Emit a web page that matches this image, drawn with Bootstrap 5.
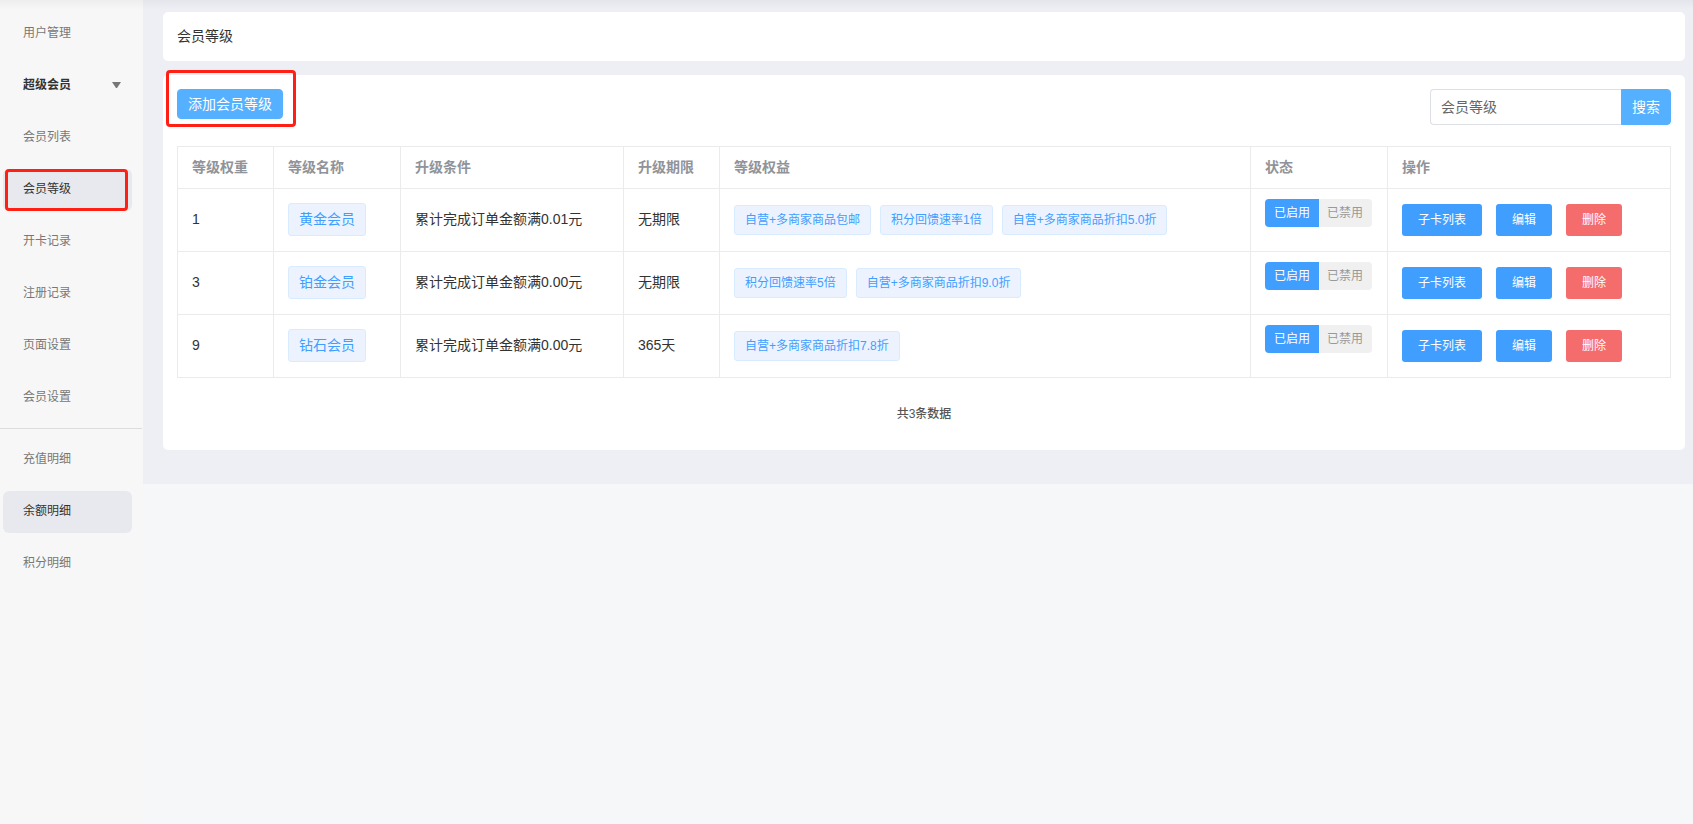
<!DOCTYPE html>
<html lang="zh-CN">
<head>
<meta charset="utf-8">
<meta name="viewport" content="width=device-width, initial-scale=1">
<title>会员等级</title>
<link href="https://cdn.jsdelivr.net/npm/bootstrap@5.3.0/dist/css/bootstrap.min.css" rel="stylesheet">
<style>
  body { font-family: "Liberation Sans", "Noto Sans CJK SC", sans-serif; font-size: 14px; line-height: 20px; color: #333; background: #f6f7f9; }
  .top-shade { height: 10px; background: linear-gradient(rgba(0,0,0,.035), rgba(0,0,0,0)); pointer-events: none; z-index: 5; }

  .side { width: 143px; background: #f7f7f7; padding-top: 13px; font-size: 12px; }
  .side a, .side button { height: 42px; margin: 0 11px 10px 3px; padding: 0 11px 2px 20px; border: 0; border-radius: 6px; background: none; color: #777; text-align: left; text-decoration: none; position: relative; }
  .side .parent { color: #333; font-weight: 700; }
  .side .on { background: #e8e9ee; color: #333; }
  .side hr { margin: -1px 1px 10px 0; border-color: #ddd; opacity: 1; }

  .work { background: #eeeff4; padding: 12px 8px 34px 20px; }
  .panel { background: #fff; border-radius: 5px; padding: 14px; }
  .panel-title { height: 49px; padding-bottom: 16px; }
  .panel-list { height: auto; margin-top: 14px; }

  .frame { position: relative; }
  .frame::after { content: ""; position: absolute; inset: 0 4px 0 2px; border: 3px solid #ff2015; border-radius: 4px; pointer-events: none; }
  .frame-wide::after { inset: -19px -13px -8px -11px; }

  .btn-sky { --bs-btn-color: #fff; --bs-btn-bg: #55b0ff; --bs-btn-border-color: #55b0ff; --bs-btn-hover-color: #fff; --bs-btn-hover-bg: #409eff; --bs-btn-hover-border-color: #409eff; font-size: 14px; line-height: 20px; padding: 4px 10px; border-radius: 4px; }
  .search { width: 241px; }
  .search .form-control { height: 36px; font-size: 14px; padding: 6px 10px; border-color: #dcdfe6; border-right: 0; border-radius: 4px; }
  .search .form-control::placeholder { color: #666; }

  .grades { table-layout: fixed; margin: 21px 0 0; --bs-table-bg: transparent; color: #333; border-color: #ebebeb; }
  .grades th { height: 42px; padding: 0 14px 2px; color: #909399; vertical-align: middle; }
  .grades td { height: 63px; padding: 0 14px 2px; vertical-align: middle; }
  .grades td.mid { padding-bottom: 0; }
  .grades td.state { padding-top: 10px; vertical-align: top; }
  .c-sm { width: 96px; } .c-name { width: 127px; } .c-rule { width: 223px; } .c-state { width: 137px; } .c-ops { width: 283px; }

  .pill { display: inline-block; border: 1px solid #d9ecff; border-radius: 3px; background: #ecf3ff; color: #409eff; padding: 0 10px; white-space: nowrap; }
  .pill-lg { font-size: 14px; line-height: 31px; }
  .pill-sm { font-size: 12px; line-height: 28px; }
  .perks { gap: 9px; }

  .switch .btn { font-size: 12px; line-height: 16px; padding: 6px 9px; border: 0; border-radius: 4px; background: #f0f0f0; color: #999; }
  .switch .btn + .btn { margin-left: 0; }
  .switch .btn.active { background: #409eff; color: #fff; }
  .ops { gap: 14px; }
  .ops .btn { font-size: 12px; line-height: 16px; padding: 8px 16px; border: 0; border-radius: 3px; color: #fff; background: #409eff; }
  .ops .btn.del { background: #f56c6c; }
  .total { font-size: 12px; line-height: 16px; font-weight: 500; color: #555; padding: 28px 0 14px; }
</style>
</head>
<body>
<div class="top-shade fixed-top"></div>
<div class="d-flex min-vh-100">
  <nav class="side d-flex flex-column flex-shrink-0">
    <a href="#" class="d-flex align-items-center">用户管理</a>
    <button type="button" class="parent d-flex align-items-center justify-content-between">超级会员
      <svg width="9" height="7" viewBox="0 0 9 7" aria-hidden="true"><path d="M0 0h9L5 6H4z" fill="#777"/></svg>
    </button>
    <a href="#" class="d-flex align-items-center">会员列表</a>
    <a href="#" class="d-flex align-items-center on frame">会员等级</a>
    <a href="#" class="d-flex align-items-center">开卡记录</a>
    <a href="#" class="d-flex align-items-center">注册记录</a>
    <a href="#" class="d-flex align-items-center">页面设置</a>
    <a href="#" class="d-flex align-items-center">会员设置</a>
    <hr>
    <a href="#" class="d-flex align-items-center">充值明细</a>
    <a href="#" class="d-flex align-items-center on">余额明细</a>
    <a href="#" class="d-flex align-items-center">积分明细</a>
  </nav>

  <main class="work flex-grow-1 align-self-start">
    <header class="panel panel-title d-flex align-items-center">会员等级</header>

    <section class="panel panel-list">
      <div class="d-flex justify-content-between align-items-start">
        <div class="frame frame-wide"><button type="button" class="btn btn-sky d-block">添加会员等级</button></div>
        <form class="search input-group flex-nowrap">
          <input type="text" class="form-control" placeholder="会员等级" aria-label="会员等级">
          <button type="button" class="btn btn-sky">搜索</button>
        </form>
      </div>

      <table class="table table-bordered grades">
        <colgroup><col class="c-sm"><col class="c-name"><col class="c-rule"><col class="c-sm"><col><col class="c-state"><col class="c-ops"></colgroup>
        <thead>
          <tr><th>等级权重</th><th>等级名称</th><th>升级条件</th><th>升级期限</th><th>等级权益</th><th>状态</th><th>操作</th></tr>
        </thead>
        <tbody>
          <tr>
            <td>1</td>
            <td><span class="pill pill-lg">黄金会员</span></td>
            <td>累计完成订单金额满0.01元</td>
            <td>无期限</td>
            <td class="mid"><div class="d-flex flex-wrap perks"><span class="pill pill-sm">自营+多商家商品包邮</span><span class="pill pill-sm">积分回馈速率1倍</span><span class="pill pill-sm">自营+多商家商品折扣5.0折</span></div></td>
            <td class="state"><div class="btn-group switch"><button type="button" class="btn active">已启用</button><button type="button" class="btn">已禁用</button></div></td>
            <td class="mid"><div class="d-flex ops"><button type="button" class="btn">子卡列表</button><button type="button" class="btn">编辑</button><button type="button" class="btn del">删除</button></div></td>
          </tr>
          <tr>
            <td>3</td>
            <td><span class="pill pill-lg">铂金会员</span></td>
            <td>累计完成订单金额满0.00元</td>
            <td>无期限</td>
            <td class="mid"><div class="d-flex flex-wrap perks"><span class="pill pill-sm">积分回馈速率5倍</span><span class="pill pill-sm">自营+多商家商品折扣9.0折</span></div></td>
            <td class="state"><div class="btn-group switch"><button type="button" class="btn active">已启用</button><button type="button" class="btn">已禁用</button></div></td>
            <td class="mid"><div class="d-flex ops"><button type="button" class="btn">子卡列表</button><button type="button" class="btn">编辑</button><button type="button" class="btn del">删除</button></div></td>
          </tr>
          <tr>
            <td>9</td>
            <td><span class="pill pill-lg">钻石会员</span></td>
            <td>累计完成订单金额满0.00元</td>
            <td>365天</td>
            <td class="mid"><div class="d-flex flex-wrap perks"><span class="pill pill-sm">自营+多商家商品折扣7.8折</span></div></td>
            <td class="state"><div class="btn-group switch"><button type="button" class="btn active">已启用</button><button type="button" class="btn">已禁用</button></div></td>
            <td class="mid"><div class="d-flex ops"><button type="button" class="btn">子卡列表</button><button type="button" class="btn">编辑</button><button type="button" class="btn del">删除</button></div></td>
          </tr>
        </tbody>
      </table>
      <div class="total text-center">共3条数据</div>
    </section>
  </main>
</div>
<script src="https://cdn.jsdelivr.net/npm/bootstrap@5.3.0/dist/js/bootstrap.bundle.min.js"></script>
</body>
</html>
